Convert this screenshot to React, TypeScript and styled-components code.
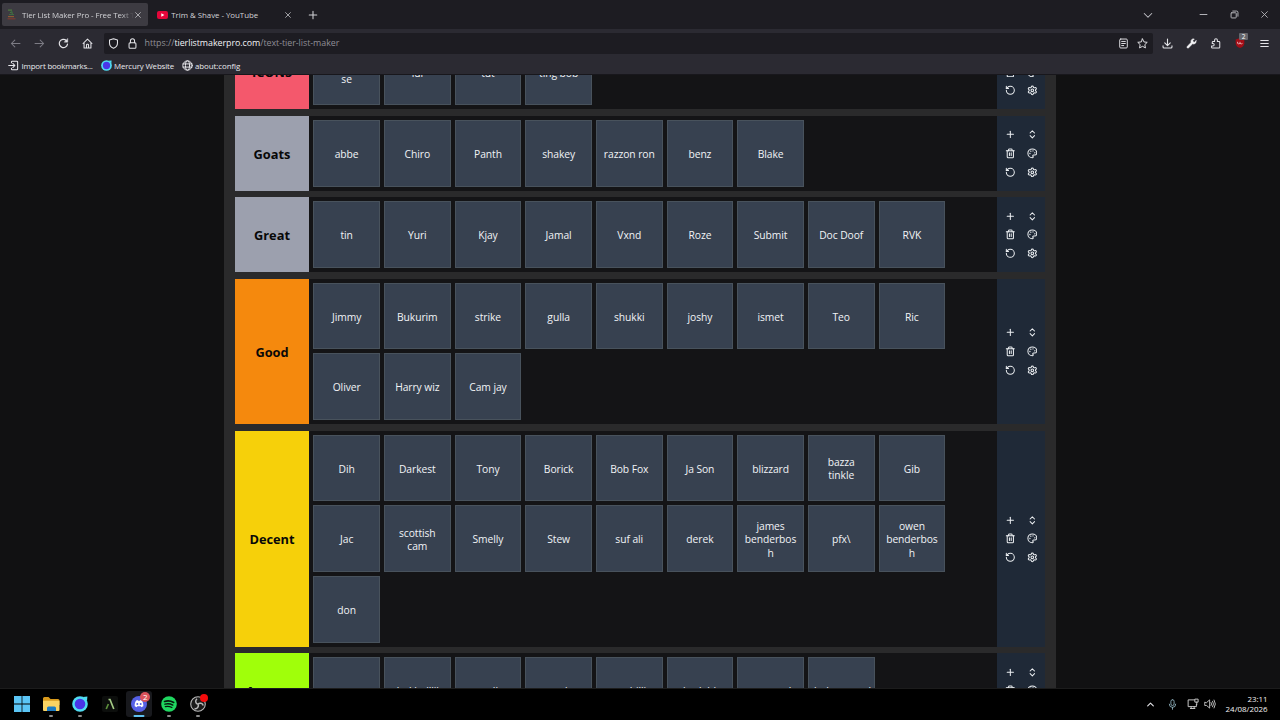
import React from "react";
import styled, { createGlobalStyle } from "styled-components";
import { ChevronsUpDown, Palette, Plus, RotateCcw, Settings, Trash2 } from "lucide-react";

const GlobalStyle = createGlobalStyle`
  * { box-sizing: border-box; }
  html, body { margin: 0; padding: 0; background: #111112; overflow: hidden; }
  body { font-family: "Open Sans", "Noto Sans", sans-serif; }
`;

const Screen = styled.div`
  display: flex;
  flex-direction: column;
  width: 1280px;
  height: 720px;
  overflow: hidden;
`;

/* ---------- browser chrome ---------- */

const TabBar = styled.div`
  display: flex;
  align-items: center;
  height: 29px;
  flex: none;
  padding-left: 2px;
  background: #1d1c22;
  color: #d2d2d6;
`;

const Tab = styled.div<{ $active?: boolean }>`
  display: flex;
  align-items: center;
  width: ${(p) => (p.$active ? 146 : 150)}px;
  height: 23px;
  padding: 0 6px 0 ${(p) => (p.$active ? 5 : 9)}px;
  border-radius: 2px;
  background: ${(p) => (p.$active ? "#3d3b42" : "transparent")};
`;

const TabIcon = styled.span<{ $gap: number }>`
  display: flex;
  flex: none;
  width: 11px;
  margin-right: ${(p) => p.$gap}px;
`;

const TabTitle = styled.span<{ $fade?: boolean; $spacing: number }>`
  flex: 1;
  overflow: hidden;
  white-space: nowrap;
  font-size: 7.9px;
  line-height: 14px;
  padding-top: 1px;
  letter-spacing: ${(p) => p.$spacing}px;
  mask-image: ${(p) => (p.$fade ? "linear-gradient(to right, #000 88%, transparent 100%)" : "none")};
`;

const NewTab = styled.span`
  display: flex;
  margin-left: 9px;
`;

const WindowButtons = styled.div`
  display: flex;
  align-items: center;
  margin-left: auto;
`;

const IconCell = styled.span<{ $w: number; $color?: string }>`
  position: relative;
  display: flex;
  align-items: center;
  justify-content: center;
  flex: none;
  width: ${(p) => p.$w}px;
  color: ${(p) => p.$color ?? "#e4e4e8"};
`;

const NavBar = styled.div`
  display: flex;
  align-items: center;
  height: 28px;
  flex: none;
  padding-left: 3.5px;
  background: #2b2a32;
`;

const UrlField = styled.div`
  display: flex;
  align-items: center;
  flex: none;
  width: 1049px;
  height: 21px;
  margin-left: 4.5px;
  padding-right: 1.5px;
  border-radius: 2px;
  background: #1d1c22;
  font-size: 8.9px;
`;

const Url = styled.span`
  flex: 1;
  margin-left: 2.5px;
  color: #8f8e96;
  letter-spacing: -0.05px;
  line-height: 14px;
  white-space: nowrap;
  b { font-weight: 400; color: #f3f3f6; }
`;

const Badge = styled.span`
  position: absolute;
  left: 10px;
  top: -5px;
  width: 9px;
  height: 7px;
  border-radius: 1px;
  background: #66666c;
  color: #fff;
  font-size: 6.5px;
  line-height: 7px;
  text-align: center;
`;

const BookmarkBar = styled.div`
  display: flex;
  align-items: center;
  height: 18px;
  flex: none;
  padding-left: 8px;
  border-bottom: 1px solid #18171c;
  background: #2b2a32;
  color: #e9e9ed;
  font-size: 7.9px;
  line-height: 12px;
`;

const Bookmark = styled.span<{ $w: number; $spacing: number }>`
  display: flex;
  align-items: center;
  gap: 2.5px;
  width: ${(p) => p.$w}px;
  letter-spacing: ${(p) => p.$spacing}px;
  white-space: nowrap;
  svg { flex: none; }
`;

/* ---------- tier list ---------- */

const Page = styled.main`
  flex: 1;
  min-height: 0;
  overflow: hidden;
  background: #111112;
`;

const Board = styled.div`
  display: flex;
  flex-direction: column;
  gap: 6.667px;
  width: 832px;
  margin: -40.333px auto 0;
  padding: 0 10.667px;
  background: #2a2a2b;
`;

const TierRow = styled.section`
  display: flex;
  flex: none;
  background: #141416;
`;

const TierLabel = styled.div<{ $color: string }>`
  display: flex;
  align-items: center;
  justify-content: center;
  flex: none;
  width: 74.667px;
  min-height: 74.667px;
  padding-top: 1.6px;
  background: ${(p) => p.$color};
  color: #080808;
  font-size: 12.8px;
  line-height: 17px;
  font-weight: 700;
`;

const Tiles = styled.div`
  display: flex;
  flex-wrap: wrap;
  align-content: flex-start;
  flex: 1;
  gap: 4px;
  padding: 4px 44px 4px 4px;
`;

const Tile = styled.div`
  display: flex;
  align-items: center;
  justify-content: center;
  width: 66.667px;
  height: 66.667px;
  padding: 2.8px 5px 0;
  border: 1px solid #48525c;
  background: #374150;
  color: #f1f3f6;
  font-size: 10.3px;
  letter-spacing: -0.07px;
  line-height: 13.333px;
  text-align: center;
  span { max-width: 100%; white-space: pre; }
`;

const Controls = styled.div`
  display: grid;
  grid-template-columns: 21.333px 21.333px;
  grid-auto-rows: 18.667px;
  place-content: center;
  place-items: center;
  flex: none;
  width: 48px;
  background: #1f2937;
  color: #eceff2;
`;

/* ---------- taskbar ---------- */

const TaskBar = styled.footer`
  display: flex;
  align-items: center;
  flex: none;
  height: 32px;
  padding: 0 12.5px 1px 6.5px;
  border-top: 1px solid #1c1c1c;
  background: #000;
`;

const TaskItem = styled.div<{ $active?: boolean; $start?: boolean }>`
  position: relative;
  display: flex;
  align-items: center;
  justify-content: center;
  width: ${(p) => (p.$start ? 30 : 26)}px;
  height: 26px;
  margin-right: ${(p) => (p.$start ? 1.5 : 3.4)}px;
  border-radius: 3px;
  background: ${(p) => (p.$active ? "#18191d" : "transparent")};
`;

const Indicator = styled.i<{ $active?: boolean }>`
  position: absolute;
  bottom: 0;
  left: 50%;
  width: ${(p) => (p.$active ? 11 : 4)}px;
  height: 2px;
  border-radius: 1px;
  transform: translateX(-50%);
  background: ${(p) => (p.$active ? "#5fc3f2" : "#8b8b8b")};
`;

const Notice = styled.span<{ $count?: boolean }>`
  position: absolute;
  top: ${(p) => (p.$count ? 1 : 3)}px;
  right: ${(p) => (p.$count ? 2 : 3)}px;
  width: ${(p) => (p.$count ? 10 : 8)}px;
  height: ${(p) => (p.$count ? 10 : 8)}px;
  border-radius: 50%;
  background: ${(p) => (p.$count ? "#d9535b" : "#f50b0b")};
  color: #fff;
  font-size: 8px;
  line-height: 10px;
  text-align: center;
`;

const Tray = styled.div`
  display: flex;
  align-items: center;
  margin-left: auto;
  color: #e8e8e8;
`;

const Clock = styled.div`
  width: 52px;
  color: #f2f2f2;
  font-size: 7.9px;
  line-height: 10.4px;
  text-align: right;
  white-space: nowrap;
`;

/* ---------- drawings ---------- */

type GlyphProps = { size?: number; w?: number; children: React.ReactNode };
const Glyph = ({ size = 11, w = 1.5, children }: GlyphProps) => (
  <svg width={size} height={size} viewBox="0 0 16 16" fill="none" stroke="currentColor" strokeWidth={w} strokeLinecap="round" strokeLinejoin="round">
    {children}
  </svg>
);

const Close = ({ size = 6 }: { size?: number }) => (
  <Glyph size={size} w={2}><path d="M1.5 1.5l13 13M14.5 1.5l-13 13" /></Glyph>
);

const MercuryLogo = ({ size }: { size: number }) => (
  <svg width={size} height={size} viewBox="0 0 16 16">
    <circle cx="8" cy="8" r="7.8" fill="#4fdcf2" />
    <path d="M11 1l4.4-.4L15 5z" fill="#4fdcf2" />
    <circle cx="8" cy="8" r="5.3" fill="#4a35e8" />
  </svg>
);

const TierLogo = () => (
  <svg width="9" height="11" viewBox="0 0 9 11" fill="none" strokeWidth="1.2">
    <path d="M1 1.2h4M3 3.2l3 1" stroke="#4e7a40" />
    <path d="M2 5.5h5M4 4l1-2" stroke="#3a6b42" />
    <path d="M1 7.6h6" stroke="#8d5a33" />
    <path d="M.5 9.8h8" stroke="#7c3b34" />
  </svg>
);

const rowIcon = { size: 10.667, strokeWidth: 2.3 };
const RowControls = () => (
  <Controls>
    <Plus {...rowIcon} />
    <ChevronsUpDown {...rowIcon} />
    <Trash2 {...rowIcon} />
    <Palette {...rowIcon} />
    <RotateCcw {...rowIcon} />
    <Settings {...rowIcon} />
  </Controls>
);

const tiers = [
  { label: "ICONS", color: "#f4586c", items: ["jes\nse", "lui", "tut", "ting bob"] },
  { label: "Goats", color: "#9ca0ae", items: ["abbe", "Chiro", "Panth", "shakey", "razzon ron", "benz", "Blake"] },
  { label: "Great", color: "#9ca0ae", items: ["tin", "Yuri", "Kjay", "Jamal", "Vxnd", "Roze", "Submit", "Doc Doof", "RVK"] },
  {
    label: "Good",
    color: "#f5890d",
    items: ["Jimmy", "Bukurim", "strike", "gulla", "shukki", "joshy", "ismet", "Teo", "Ric", "Oliver", "Harry wiz", "Cam jay"],
  },
  {
    label: "Decent",
    color: "#f6d00a",
    items: [
      "Dih", "Darkest", "Tony", "Borick", "Bob Fox", "Ja Son", "blizzard", "bazza\ntinkle", "Gib",
      "Jac", "scottish\ncam", "Smelly", "Stew", "suf ali", "derek", "james\nbenderbos\nh", "pfx\\", "owen\nbenderbos\nh",
      "don",
    ],
  },
  {
    label: "Average",
    color: "#a0ff0a",
    items: ["reece", "darkballlik", "smelly", "sonde", "snobilli", "chodable", "mascord", "bobmasond"],
  },
];

const Browser = () => (
  <>
    <TabBar>
      <Tab $active>
        <TabIcon $gap={4}><TierLogo /></TabIcon>
        <TabTitle $fade $spacing={-0.09}>Tier List Maker Pro - Free Text Tier</TabTitle>
        <IconCell $w={8} $color="#c9c9ce"><Close /></IconCell>
      </Tab>
      <Tab>
        <TabIcon $gap={3.3}>
          <svg width="11" height="8" viewBox="0 0 11 8">
            <rect width="11" height="8" rx="2" fill="#e3063a" />
            <path d="M4.3 2.2v3.6L7.4 4z" fill="#fff" />
          </svg>
        </TabIcon>
        <TabTitle $spacing={-0.04}>Trim &amp; Shave - YouTube</TabTitle>
        <IconCell $w={8} $color="#c9c9ce"><Close /></IconCell>
      </Tab>
      <NewTab><Glyph size={12} w={1.4}><path d="M8 3v10M3 8h10" /></Glyph></NewTab>
      <WindowButtons>
        <IconCell $w={30} $color="#c2c2c8"><Glyph size={12} w={1.4}><path d="M3 6l5 5 5-5" /></Glyph></IconCell>
        <IconCell $w={25} />
        <IconCell $w={31} $color="#b8b8bd"><Glyph w={1.4}><path d="M3 8h10" /></Glyph></IconCell>
        <IconCell $w={30} $color="#b8b8bd">
          <Glyph w={1.4}><rect x="3" y="5.5" width="7.5" height="7.5" rx="1" /><path d="M5.5 3H11a2 2 0 0 1 2 2v5.5" /></Glyph>
        </IconCell>
        <IconCell $w={31} $color="#b8b8bd"><Close size={7} /></IconCell>
      </WindowButtons>
    </TabBar>
    <NavBar>
      <IconCell $w={24} $color="#7c7b84"><Glyph><path d="M14.5 8H2M7 3L2 8l5 5" /></Glyph></IconCell>
      <IconCell $w={24} $color="#7c7b84"><Glyph><path d="M1.5 8H14M9 3l5 5-5 5" /></Glyph></IconCell>
      <IconCell $w={24}>
        <Glyph w={1.7}><path d="M13.8 8.8A6 6 0 1 1 12 3.6" /><path d="M14.2 1v5h-5z" fill="currentColor" strokeWidth=".6" /></Glyph>
      </IconCell>
      <IconCell $w={24}>
        <Glyph><path d="M1.5 8L8 1.5 14.5 8M3 7v7.5h10V7M6.5 14V10a1 1 0 0 1 1-1h1a1 1 0 0 1 1 1v4" /></Glyph>
      </IconCell>
      <UrlField>
        <IconCell $w={19}>
          <Glyph><path d="M8 1L2.2 3v4.2C2.2 11 4.6 13.6 8 15c3.4-1.4 5.8-4 5.8-7.8V3z" /></Glyph>
        </IconCell>
        <IconCell $w={19}>
          <Glyph><rect x="3" y="7" width="10" height="8" rx="1.5" /><path d="M5 7V4a3 3 0 0 1 6 0v3" /></Glyph>
        </IconCell>
        <Url>https://<b>tierlistmakerpro.com</b>/text-tier-list-maker</Url>
        <IconCell $w={19}>
          <Glyph w={1.4}><rect x="2.5" y="1.5" width="11" height="13" rx="1.5" /><path d="M5.3 5h5.4M5.3 8h5.4M5.3 11h3" /></Glyph>
        </IconCell>
        <IconCell $w={19}>
          <Glyph w={1.4}><path d="M8 1.3l2.1 4.4 4.8.6-3.5 3.3.9 4.8L8 12.1l-4.3 2.3.9-4.8L1.1 6.3l4.8-.6z" /></Glyph>
        </IconCell>
      </UrlField>
      <IconCell $w={28}>
        <Glyph w={1.6}><path d="M8 1.5V11M4 7l4 4 4-4M1.5 11.5v1.5a1.5 1.5 0 0 0 1.5 1.5h10a1.5 1.5 0 0 0 1.5-1.5v-1.5" /></Glyph>
      </IconCell>
      <IconCell $w={21} $color="#f5f5f7">
        <Glyph w={1}><path fill="currentColor" d="M14.6 4.2l-2.3 1.9-2-.4-.4-2L12 1.5C9.4.7 7 2.6 7.3 5.3L7.5 6.5 1.8 12.200a1.3 1.3 0 0 0 2 2L9.500 8.500c3 .9 5.700-1.200 5.100-4.300z" /></Glyph>
      </IconCell>
      <IconCell $w={27}>
        <Glyph w={1.5}><path d="M4.5 14.5h8.5a1.200 1.200 0 0 0 1.200-1.200V6.200A1.200 1.200 0 0 0 13 5h-2.300V3a2 2 0 0 0-4 0v2H4.500a1.200 1.200 0 0 0-1.200 1.200V8h1a1.800 1.800 0 0 1 0 3.600h-2v1.700a1.200 1.200 0 0 0 1.200 1.200z" /></Glyph>
      </IconCell>
      <IconCell $w={22}>
        <svg width="10" height="10" viewBox="0 0 10 10">
          <path d="M5 0l4.3 1.5v3.7C9.3 7.5 7.5 9.2 5 10 2.5 9.2.7 7.5.7 5.2V1.5z" fill="#a30d16" />
          <path d="M2.6 3.8v1.6q1.2 1 2.4 0V3.8M5 5.4q1.3 1 2.5 0" fill="none" stroke="#e9c9cb" strokeWidth=".8" />
        </svg>
        <Badge>2</Badge>
      </IconCell>
      <IconCell $w={26}><Glyph w={1.5}><path d="M2.5 3.5h11M2.5 8h11M2.5 12.5h11" /></Glyph></IconCell>
    </NavBar>
    <BookmarkBar>
      <Bookmark $w={92.5} $spacing={-0.18}>
        <Glyph><path d="M5 4V3a1.2 1.2 0 0 1 1.2-1.2h6.6A1.2 1.2 0 0 1 14 3v10a1.2 1.2 0 0 1-1.2 1.2H6.2A1.2 1.2 0 0 1 5 13v-1M1 8h9M7 5l3 3-3 3" /></Glyph>
        Import bookmarks...
      </Bookmark>
      <Bookmark $w={81} $spacing={-0.14}><MercuryLogo size={11} />Mercury Website</Bookmark>
      <Bookmark $w={70} $spacing={-0.06}>
        <Glyph w={1.4}><circle cx="8" cy="8" r="6.8" /><ellipse cx="8" cy="8" rx="3" ry="6.8" /><path d="M1.5 5.7h13M1.5 10.3h13" /></Glyph>
        about:config
      </Bookmark>
    </BookmarkBar>
  </>
);

const WindowsTaskbar = () => (
  <TaskBar>
    <TaskItem $start>
      <svg width="16" height="16" viewBox="0 0 16 16">
        <path d="M0 0h7.6v7.6H0zM8.4 0H16v7.6H8.4zM0 8.4h7.6V16H0zM8.4 8.4H16V16H8.4z" fill="#5bc5f5" />
      </svg>
    </TaskItem>
    <TaskItem>
      <svg width="17" height="15" viewBox="0 0 17 15">
        <path d="M0 1.5A1.5 1.5 0 0 1 1.5 0h4L7.5 2H15a1.5 1.5 0 0 1 1.5 1.5V8H0z" fill="#d99a1c" />
        <path d="M0 3.8h16.5v9.2a1 1 0 0 1-1 1H1a1 1 0 0 1-1-1z" fill="#fbd463" />
        <path d="M4 14v-3a1.5 1.5 0 0 1 1.5-1.5h6A1.5 1.5 0 0 1 13 11v3z" fill="#1c7cc4" />
      </svg>
      <Indicator />
    </TaskItem>
    <TaskItem><MercuryLogo size={16} /><Indicator /></TaskItem>
    <TaskItem>
      <svg width="16" height="16" viewBox="0 0 16 16" fill="none" strokeWidth="1.7">
        <rect width="16" height="16" rx="2" fill="#0c0e0c" />
        <path d="M4.2 13l2.200-5" stroke="#5d8f3c" />
        <path d="M6.5 3.5h1.5l3.800 9.500" stroke="#a3c984" />
      </svg>
    </TaskItem>
    <TaskItem $active>
      <svg width="16" height="16" viewBox="0 0 16 16">
        <circle cx="8" cy="8" r="8" fill="#5661e6" />
        <path d="M5.2 4.5l1.4-.4.4.7h2l.4-.7 1.4.4c1.2 1.8 1.7 3.7 1.5 5.7l-2 1-.6-1H6.3l-.6 1-2-1c-.2-2 .3-3.9 1.5-5.7z" fill="#fff" />
        <circle cx="6.3" cy="8" r="1" fill="#5661e6" /><circle cx="9.7" cy="8" r="1" fill="#5661e6" />
      </svg>
      <Notice $count>2</Notice>
      <Indicator $active />
    </TaskItem>
    <TaskItem>
      <svg width="16" height="16" viewBox="0 0 16 16" fill="none" stroke="#07180c" strokeLinecap="round">
        <circle cx="8" cy="8" r="7.8" fill="#1fd760" stroke="none" />
        <path d="M3.5 5.5q4.8-1.4 9.2.9" strokeWidth="1.7" />
        <path d="M4 8.2q4.1-1.2 7.8.9" strokeWidth="1.4" />
        <path d="M4.3 10.7q3.4-.9 6.6.8" strokeWidth="1.2" />
      </svg>
      <Indicator />
    </TaskItem>
    <TaskItem>
      <svg width="16" height="16" viewBox="0 0 16 16" fill="none" stroke="#b9b9b9">
        <circle cx="8" cy="8" r="7.3" fill="#1b1b1b" strokeWidth="1.1" />
        <path d="M7 2.8a3 3 0 0 0 1 5.4M13.2 9.5A3 3 0 0 0 8 8.2M4.5 12.5A3 3 0 0 0 8 8.2" strokeWidth="1.5" />
      </svg>
      <Notice />
      <Indicator />
    </TaskItem>
    <Tray>
      <IconCell $w={22}><Glyph size={9} w={2}><path d="M3 10.5l5-5 5 5" /></Glyph></IconCell>
      <IconCell $w={21} $color="#8fb0bd">
        <Glyph size={11} w={1.3}><rect x="5.7" y="1" width="4.6" height="8.5" rx="2.3" /><path d="M3.3 7.5a4.7 4.7 0 0 0 9.4 0M8 12.2V15" /></Glyph>
      </IconCell>
      <IconCell $w={21} $color="#c9c9c9">
        <Glyph size={12} w={1.3}><path d="M10 2.5H1.5v9h11V8.5M4.5 14h6M5.5 11.5V14M9.5 11.5V14" /><rect x="11" y="1.5" width="3.8" height="4" /><path d="M13 5.5V9" /></Glyph>
      </IconCell>
      <IconCell $w={12} $color="#c9c9c9">
        <Glyph size={12} w={1.2}><path d="M1 6v4h2.5L7.5 13.5v-11L3.5 6zM9.5 6q1.3 2 0 4M11.5 4.3q2.5 3.7 0 7.4M13.5 2.7q3.5 5.3 0 10.6" /></Glyph>
      </IconCell>
      <Clock>23:11<br />24/08/2026</Clock>
    </Tray>
  </TaskBar>
);

export default function App() {
  return (
    <Screen>
      <GlobalStyle />
      <Browser />
      <Page>
        <Board>
          {tiers.map((tier) => (
            <TierRow key={tier.label}>
              <TierLabel $color={tier.color}>{tier.label}</TierLabel>
              <Tiles>
                {tier.items.map((item) => (
                  <Tile key={item}><span>{item}</span></Tile>
                ))}
              </Tiles>
              <RowControls />
            </TierRow>
          ))}
        </Board>
      </Page>
      <WindowsTaskbar />
    </Screen>
  );
}
